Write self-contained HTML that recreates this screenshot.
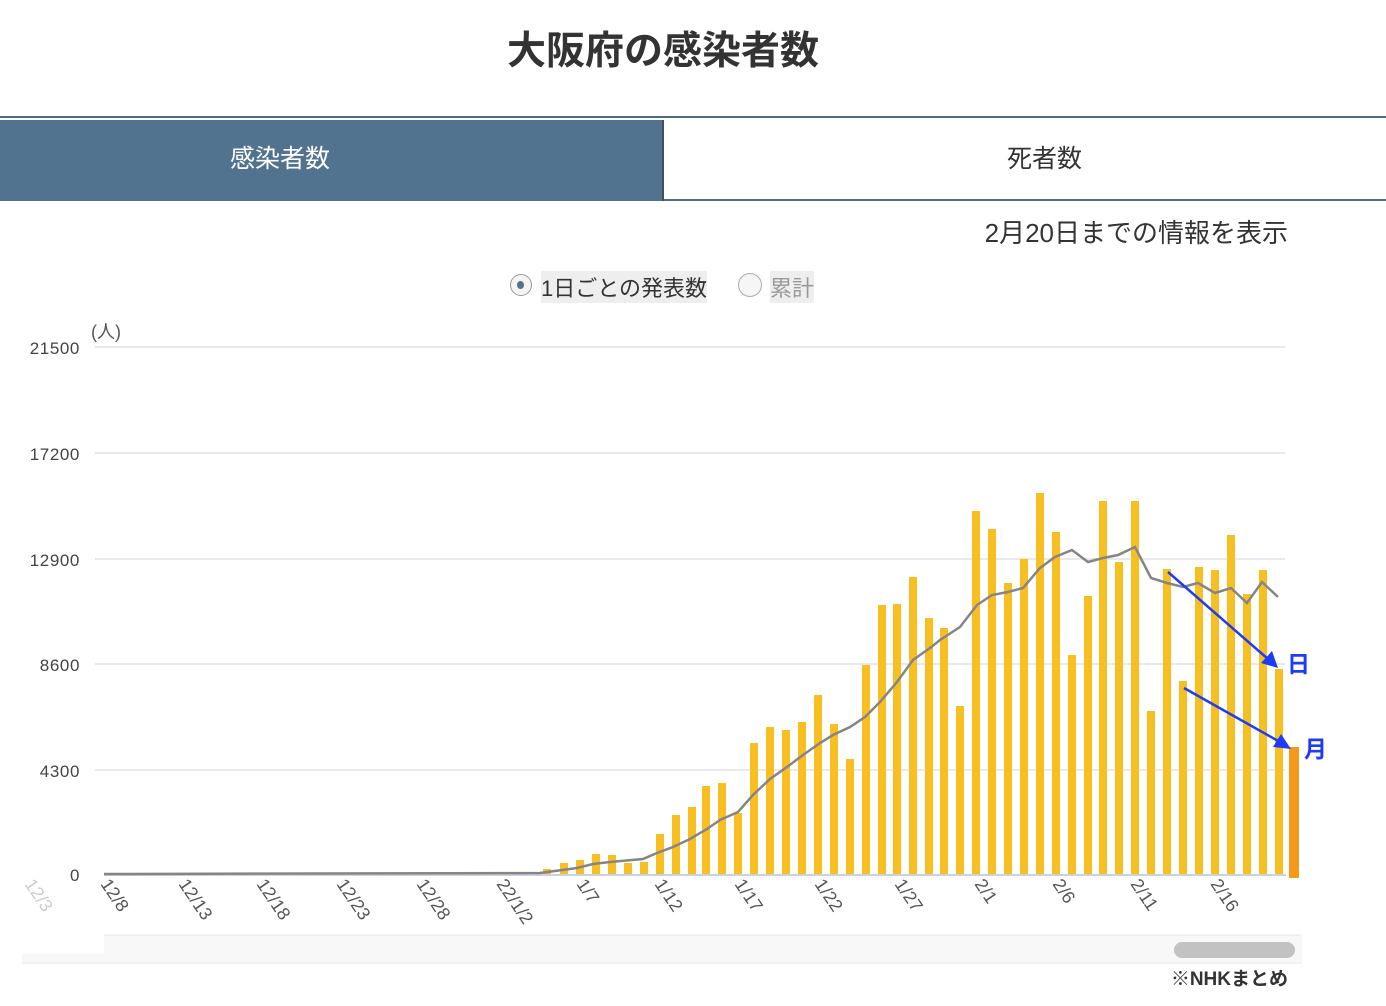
<!DOCTYPE html>
<html><head><meta charset="utf-8"><style>
body{margin:0;width:1386px;height:1006px;background:#fff;overflow:hidden;font-family:"Liberation Sans","Noto Sans CJK JP",sans-serif;position:relative}
.a{position:absolute;white-space:nowrap}
</style></head><body>
<div class="a" style="left:0;width:1326px;top:20px;text-align:center;font-size:39px;font-weight:bold;color:#333">大阪府の感染者数</div>
<div class="a" style="left:0;top:116px;width:1386px;height:2px;background:#4f6a85"></div>
<div class="a" style="left:0;top:120px;width:662px;height:81px;background:#52738f;z-index:-1"></div>
<div class="a" style="left:0;top:120px;width:560px;height:81px;color:#fff;font-size:25px;line-height:78px;text-align:center">感染者数</div>
<div class="a" style="left:662px;top:120px;width:2px;height:81px;background:#3d4f60"></div>
<div class="a" style="left:664px;top:120px;width:722px;height:79px;border-bottom:2px solid #4f6a85"></div>
<div class="a" style="left:1007px;top:120px;font-size:25px;line-height:78px;color:#333">死者数</div>
<div class="a" style="right:98px;top:213px;font-size:26px;color:#333">2月20日までの情報を表示</div>
<div class="a" style="left:510px;top:274px;width:20px;height:20px;border:1px solid #999;border-radius:50%;background:#f4f4f4"></div>
<div class="a" style="left:517px;top:281px;width:7px;height:8px;border-radius:50%;background:#52738f"></div>
<div class="a" style="left:541px;top:271px;font-size:22px;color:#333;background:#eee">1日ごとの発表数</div>
<div class="a" style="left:738px;top:273px;width:22px;height:22px;border:1px solid #aaa;border-radius:50%;background:#f6f6f6"></div>
<div class="a" style="left:770px;top:271px;font-size:22px;color:#999;background:#eee">累計</div>
<svg class="a" style="left:0;top:0" width="1386" height="1006" font-family="Liberation Sans, Noto Sans CJK JP, sans-serif">
<g fill="#444" font-size="17" text-anchor="end" letter-spacing="0.6">
<text x="80" y="354">21500</text><text x="80" y="460">17200</text><text x="80" y="566">12900</text><text x="80" y="671">8600</text><text x="80" y="777">4300</text><text x="80" y="881">0</text></g>
<text x="91" y="338" font-size="18" fill="#555">(人)</text>
<g stroke="#e8e8ee" stroke-width="2"><line x1="95" y1="347" x2="1285" y2="347"/><line x1="95" y1="453" x2="1285" y2="453"/><line x1="95" y1="559" x2="1285" y2="559"/><line x1="95" y1="664" x2="1285" y2="664"/><line x1="95" y1="770" x2="1285" y2="770"/></g>
<g fill="#f8bf22">
<rect x="543" y="869" width="8" height="6"/><rect x="560" y="863" width="8" height="12"/><rect x="576" y="860" width="8" height="15"/><rect x="592" y="854" width="8" height="21"/><rect x="608" y="855" width="8" height="20"/><rect x="624" y="863" width="8" height="12"/><rect x="640" y="862" width="8" height="13"/><rect x="656" y="834" width="8" height="41"/><rect x="672" y="815" width="8" height="60"/><rect x="688" y="807" width="8" height="68"/><rect x="702" y="786" width="8" height="89"/><rect x="718" y="783" width="8" height="92"/><rect x="734" y="813" width="8" height="62"/><rect x="750" y="743" width="8" height="132"/><rect x="766" y="727" width="8" height="148"/><rect x="782" y="730" width="8" height="145"/><rect x="798" y="722" width="8" height="153"/><rect x="814" y="695" width="8" height="180"/><rect x="830" y="724" width="8" height="151"/><rect x="846" y="759" width="8" height="116"/><rect x="862" y="665" width="8" height="210"/><rect x="878" y="605" width="8" height="270"/><rect x="893" y="604" width="8" height="271"/><rect x="909" y="577" width="8" height="298"/><rect x="925" y="618" width="8" height="257"/><rect x="940" y="628" width="8" height="247"/><rect x="956" y="706" width="8" height="169"/><rect x="972" y="511" width="8" height="364"/><rect x="988" y="529" width="8" height="346"/><rect x="1004" y="583" width="8" height="292"/><rect x="1020" y="559" width="8" height="316"/><rect x="1036" y="493" width="8" height="382"/><rect x="1052" y="532" width="8" height="343"/><rect x="1068" y="655" width="8" height="220"/><rect x="1084" y="596" width="8" height="279"/><rect x="1099" y="501" width="8" height="374"/><rect x="1115" y="562" width="8" height="313"/><rect x="1131" y="501" width="8" height="374"/><rect x="1147" y="711" width="8" height="164"/><rect x="1163" y="569" width="8" height="306"/><rect x="1179" y="681" width="8" height="194"/><rect x="1195" y="567" width="8" height="308"/><rect x="1211" y="570" width="8" height="305"/><rect x="1227" y="535" width="8" height="340"/><rect x="1243" y="594" width="8" height="281"/><rect x="1259" y="570" width="8" height="305"/><rect x="1275" y="669" width="8" height="206"/>
</g>
<line x1="104" y1="875" x2="1286" y2="875" stroke="#ccd0e0" stroke-width="2"/>
<rect x="1289" y="747" width="10" height="131" fill="#f39a1a"/>
<polyline fill="none" stroke="#858585" stroke-width="2.5" points="104,874 540,873 577,868 593,864 610,862 643,859 657,853 673,847 690,839 707,829 720,820 738,812 753,795 770,779 787,767 803,755 820,743 833,735 850,727 865,717 880,702 897,682 913,660 930,648 940,640 960,627 977,605 992,595 1008,592 1023,588 1040,568 1055,557 1072,550 1088,562 1103,558 1118,555 1135,547 1151,578 1167,583 1183,587 1198,583 1215,593 1231,588 1247,603 1262,582 1278,597"/>
<g stroke="#1f3cf5" stroke-width="2.5" fill="#1f3cf5">
<line x1="1168" y1="572" x2="1268" y2="659"/><polygon points="1278,668 1261,663 1272,651" stroke="none"/>
<line x1="1184" y1="688" x2="1280" y2="742"/><polygon points="1291,749 1273,747 1281,734" stroke="none"/></g>
<text x="1287" y="672" font-size="23" font-weight="bold" fill="#1f3cf5">日</text>
<text x="1304" y="757" font-size="23" font-weight="bold" fill="#1f3cf5">月</text>
<g fill="#555" font-size="18">
<text transform="translate(24,884) rotate(56)" fill="#ccc">12/3</text>
<text transform="translate(100,884) rotate(56)">12/8</text>
<text transform="translate(178,884) rotate(56)">12/13</text>
<text transform="translate(256,884) rotate(56)">12/18</text>
<text transform="translate(336,884) rotate(56)">12/23</text>
<text transform="translate(416,884) rotate(56)">12/28</text>
<text transform="translate(496,884) rotate(56)">22/1/2</text>
<text transform="translate(576,884) rotate(56)">1/7</text>
<text transform="translate(654,884) rotate(56)">1/12</text>
<text transform="translate(734,884) rotate(56)">1/17</text>
<text transform="translate(814,884) rotate(56)">1/22</text>
<text transform="translate(894,884) rotate(56)">1/27</text>
<text transform="translate(974,884) rotate(56)">2/1</text>
<text transform="translate(1052,884) rotate(56)">2/6</text>
<text transform="translate(1130,884) rotate(56)">2/11</text>
<text transform="translate(1210,884) rotate(56)">2/16</text></g>
<rect x="510" y="925" width="40" height="30" fill="#fff"/>
<rect x="22" y="935" width="1280" height="27" fill="#f8f8f8"/>
<line x1="22" y1="935" x2="1300" y2="935" stroke="#e4e4e4"/>
<line x1="22" y1="963" x2="1302" y2="963" stroke="#e4e4e4"/>
<rect x="22" y="920" width="82" height="34" fill="#fff"/>
<rect x="1174" y="942" width="121" height="16" rx="8" fill="#c2c2c2"/>
<text x="1288" y="985" font-size="19" font-weight="bold" fill="#333" text-anchor="end">※NHKまとめ</text>
</svg>
</body></html>
